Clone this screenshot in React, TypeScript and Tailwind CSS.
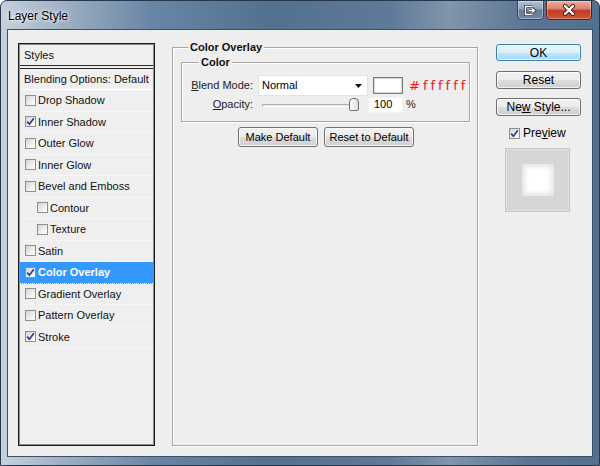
import React from "react";

const font = { fontFamily: '"Liberation Sans", Arial, sans-serif' };

function Check({ checked }: { checked?: boolean }) {
  return (
    <span className="w-[11px] h-[11px] shrink-0 border border-[#8e8f8f] bg-[linear-gradient(135deg,#d4d4d4_0%,#f4f4f4_70%,#ffffff_100%)] flex items-center justify-center">
      {checked && (
        <svg width="9" height="9" viewBox="0 0 9 9">
          <path d="M1.2 4.6 L3.4 7.2 L7.8 1.2" stroke="#2b3d91" strokeWidth="1.7" fill="none" />
        </svg>
      )}
    </span>
  );
}

const items: { label: string; checked?: boolean; indent?: boolean; selected?: boolean }[] = [
  { label: "Drop Shadow" },
  { label: "Inner Shadow", checked: true },
  { label: "Outer Glow" },
  { label: "Inner Glow" },
  { label: "Bevel and Emboss" },
  { label: "Contour", indent: true },
  { label: "Texture", indent: true },
  { label: "Satin" },
  { label: "Color Overlay", checked: true, selected: true },
  { label: "Gradient Overlay" },
  { label: "Pattern Overlay" },
  { label: "Stroke", checked: true },
];

function WinButton({
  children,
  w,
  h,
  primary,
}: {
  children: React.ReactNode;
  w: string;
  h: string;
  primary?: boolean;
}) {
  const cls = primary
    ? "border-[#3c7fb1] bg-[linear-gradient(#eaf6fd_0%,#d9f0fc_50%,#bee6fd_51%,#a7d9f5_100%)]"
    : "border-[#707070] bg-[linear-gradient(#f2f2f2_0%,#ebebeb_50%,#dddddd_51%,#cfcfcf_100%)]";
  return (
    <div
      className={`${w} ${h} ${cls} border rounded-[3px] shadow-[inset_0_0_0_1px_rgba(255,255,255,0.7)] flex items-center justify-center text-[11px] text-black leading-none`}
    >
      {children}
    </div>
  );
}

export default function App() {
  return (
    <div
      className="w-[600px] h-[466px] flex flex-col rounded-t-[7px] border border-[#28384c] bg-[linear-gradient(90deg,#c6d1dc_0%,#9fb1c4_10%,#6a86a6_25%,#53708f_45%,#5f7a98_65%,#8195ac_75%,#5a7593_88%,#52708f_100%)] overflow-hidden"
      style={font}
    >
      {/* Title bar */}
      <div className="h-[28px] shrink-0 flex items-start">
        <div className="pl-[7px] pt-[9px] text-[12px] text-black leading-none [text-shadow:0_0_6px_#fff,0_0_3px_#fff]">
          Layer Style
        </div>
        <div className="ml-auto mr-[7px] flex gap-[2px] -mt-px">
          <div className="w-[27px] h-[20px] rounded-b-[4px] border border-[#34455c] bg-[linear-gradient(#b5c3d2_0%,#8ea3ba_45%,#637d99_50%,#6f88a3_100%)] shadow-[inset_0_0_0_1px_rgba(255,255,255,0.35)] flex items-center justify-center">
            <svg width="13" height="11" viewBox="0 0 13 11">
              <path d="M8.5 1.5 H1.5 V9.5 H8.5" stroke="#2c3a4c" strokeWidth="3" fill="none" />
              <path d="M8.5 1.5 H1.5 V9.5 H8.5" stroke="#ffffff" strokeWidth="1.3" fill="none" />
              <path d="M4.5 5.5 H10 M8 3.5 L10.5 5.5 L8 7.5" stroke="#2c3a4c" strokeWidth="3" fill="none" />
              <path d="M4.5 5.5 H10 M8 3.5 L10.5 5.5 L8 7.5" stroke="#ffffff" strokeWidth="1.3" fill="none" />
            </svg>
          </div>
          <div className="w-[46px] h-[20px] rounded-b-[4px] border border-[#5a1f16] bg-[linear-gradient(#eab0a0_0%,#d8806a_45%,#c23b20_52%,#d0583a_100%)] shadow-[inset_0_0_0_1px_rgba(255,255,255,0.3)] flex items-center justify-center">
            <svg width="14" height="12" viewBox="0 0 14 12">
              <path d="M3 2 L11 10 M11 2 L3 10" stroke="#4a1a12" strokeWidth="4.2" strokeLinecap="round" />
              <path d="M3 2 L11 10 M11 2 L3 10" stroke="#ffffff" strokeWidth="2.4" strokeLinecap="round" />
            </svg>
          </div>
        </div>
      </div>

      {/* Content area */}
      <div className="mx-[6px] h-[428px] shrink-0 border border-[#3f5066] bg-[#eeeeee] flex items-start pl-[10px] text-[11px] text-[#111]">
        {/* Styles list */}
        <div className="mt-[13px] w-[137px] h-[403px] shrink-0 border border-[#1c1c1c] shadow-[inset_0_0_0_1px_#8a8a8a] bg-[#efefef] flex flex-col p-px">
          <div className="h-[21px] shrink-0 pl-[4px] flex items-center border-b border-[#2a2a2a]">Styles</div>
          <div className="mt-[2px] h-[22px] shrink-0 pl-[4px] flex items-center border-t border-[#2a2a2a] border-b border-b-white">
            Blending Options: Default
          </div>
          {items.map((it) => (
            <div
              key={it.label}
              className={`h-[21.5px] shrink-0 flex items-center gap-[2px] border-b border-dotted border-white ${
                it.indent ? "pl-[17px]" : "pl-[5px]"
              } ${it.selected ? "bg-[#3399ff] text-white font-bold" : ""}`}
            >
              <Check checked={it.checked} />
              <span>{it.label}</span>
            </div>
          ))}
        </div>

        {/* Middle group */}
        <div className="ml-[17px] mt-[17px] w-[306px] h-[399px] shrink-0 border border-[#a6a6a6] shadow-[inset_1px_1px_0_#fff,1px_1px_0_#fff] flex flex-col">
          <div className="-mt-[7px] ml-[15px] px-[2px] w-fit bg-[#eeeeee] font-bold text-[11px] leading-[13px] text-[#111]">
            Color Overlay
          </div>
          <div className="mt-[8px] ml-[8px] w-[289px] border border-[#a6a6a6] shadow-[inset_1px_1px_0_#fff,1px_1px_0_#fff] flex flex-col pb-[8px]">
            <div className="-mt-[7px] ml-[17px] px-[2px] w-fit bg-[#eeeeee] font-bold leading-[13px]">Color</div>
            <div className="mt-[6px] flex items-center h-[21px]">
              <div className="w-[71px] text-right text-[#222]">
                <span className="underline">B</span>lend Mode:
              </div>
              <div className="ml-[5px] w-[110px] h-[21px] bg-white border border-[#e2e2e2] flex items-center pl-[3px] pr-[5px]">
                <span className="text-black">Normal</span>
                <svg className="ml-auto" width="7" height="4" viewBox="0 0 7 4">
                  <path d="M0 0 H7 L3.5 4 Z" fill="#111" />
                </svg>
              </div>
              <div className="ml-[5px] w-[30px] h-[17px] bg-white border border-[#7a7a7a] shadow-[inset_0_0_0_1px_#d8d8d8]" />
              <div className="ml-[6px] text-[13px] leading-none text-[#ff1010] tracking-[3px] font-['DejaVu_Sans',sans-serif]">
                #ffffff
              </div>
            </div>
            <div className="flex items-center h-[17px]">
              <div className="w-[71px] text-right text-[#222]">
                <span className="underline">O</span>pacity:
              </div>
              <div className="ml-[5px] w-[105px] h-[17px] relative">
                <div className="absolute left-[4px] top-[8px] w-[96px] h-[3px] border border-[#b0b0b0] border-b-white border-r-white bg-[#e4e4e4]" />
                <div className="absolute left-[91px] top-[2px] w-[10px] h-[13px] rounded-t-[4px] rounded-b-[2px] border border-[#707070] bg-[linear-gradient(90deg,#fdfdfd,#dcdcdc)]" />
              </div>
              <div className="ml-[5px] w-[35px] h-[16px] bg-white border border-[#f4f4f4] flex items-center pl-[5px] text-black">
                100
              </div>
              <div className="ml-[3px] text-[#222]">%</div>
            </div>
          </div>
          <div className="mt-[5px] flex justify-center gap-[6px] pl-[2px]">
            <WinButton w="w-[80px]" h="h-[20px]">Make Default</WinButton>
            <WinButton w="w-[90px]" h="h-[20px]">Reset to Default</WinButton>
          </div>
        </div>

        {/* Right column */}
        <div className="ml-[18px] mt-[14px] w-[85px] shrink-0 flex flex-col">
          <WinButton w="w-[85px]" h="h-[17px]" primary>
            <span className="text-[12px]">OK</span>
          </WinButton>
          <div className="mt-[10px]">
            <WinButton w="w-[85px]" h="h-[18px]">
              <span className="text-[12px]">Reset</span>
            </WinButton>
          </div>
          <div className="mt-[9px]">
            <WinButton w="w-[85px]" h="h-[18px]">
              <span className="text-[12px]">
                Ne<span className="underline">w</span> Style...
              </span>
            </WinButton>
          </div>
          <div className="mt-[8px] ml-[13px] flex items-center gap-[3px] text-[12px] text-black">
            <Check checked />
            <span>
              Pre<span className="underline">v</span>iew
            </span>
          </div>
          <div className="mt-[6px] ml-[9px] w-[65px] h-[64px] bg-[#d6d6d6] border border-[#c4c4c4] shadow-[inset_0_0_0_1px_#e0e0e0] flex items-center justify-center">
            <div className="w-[32px] h-[32px] bg-white shadow-[inset_0_0_5px_3px_#e6e6e6]" />
          </div>
        </div>
      </div>
    </div>
  );
}
